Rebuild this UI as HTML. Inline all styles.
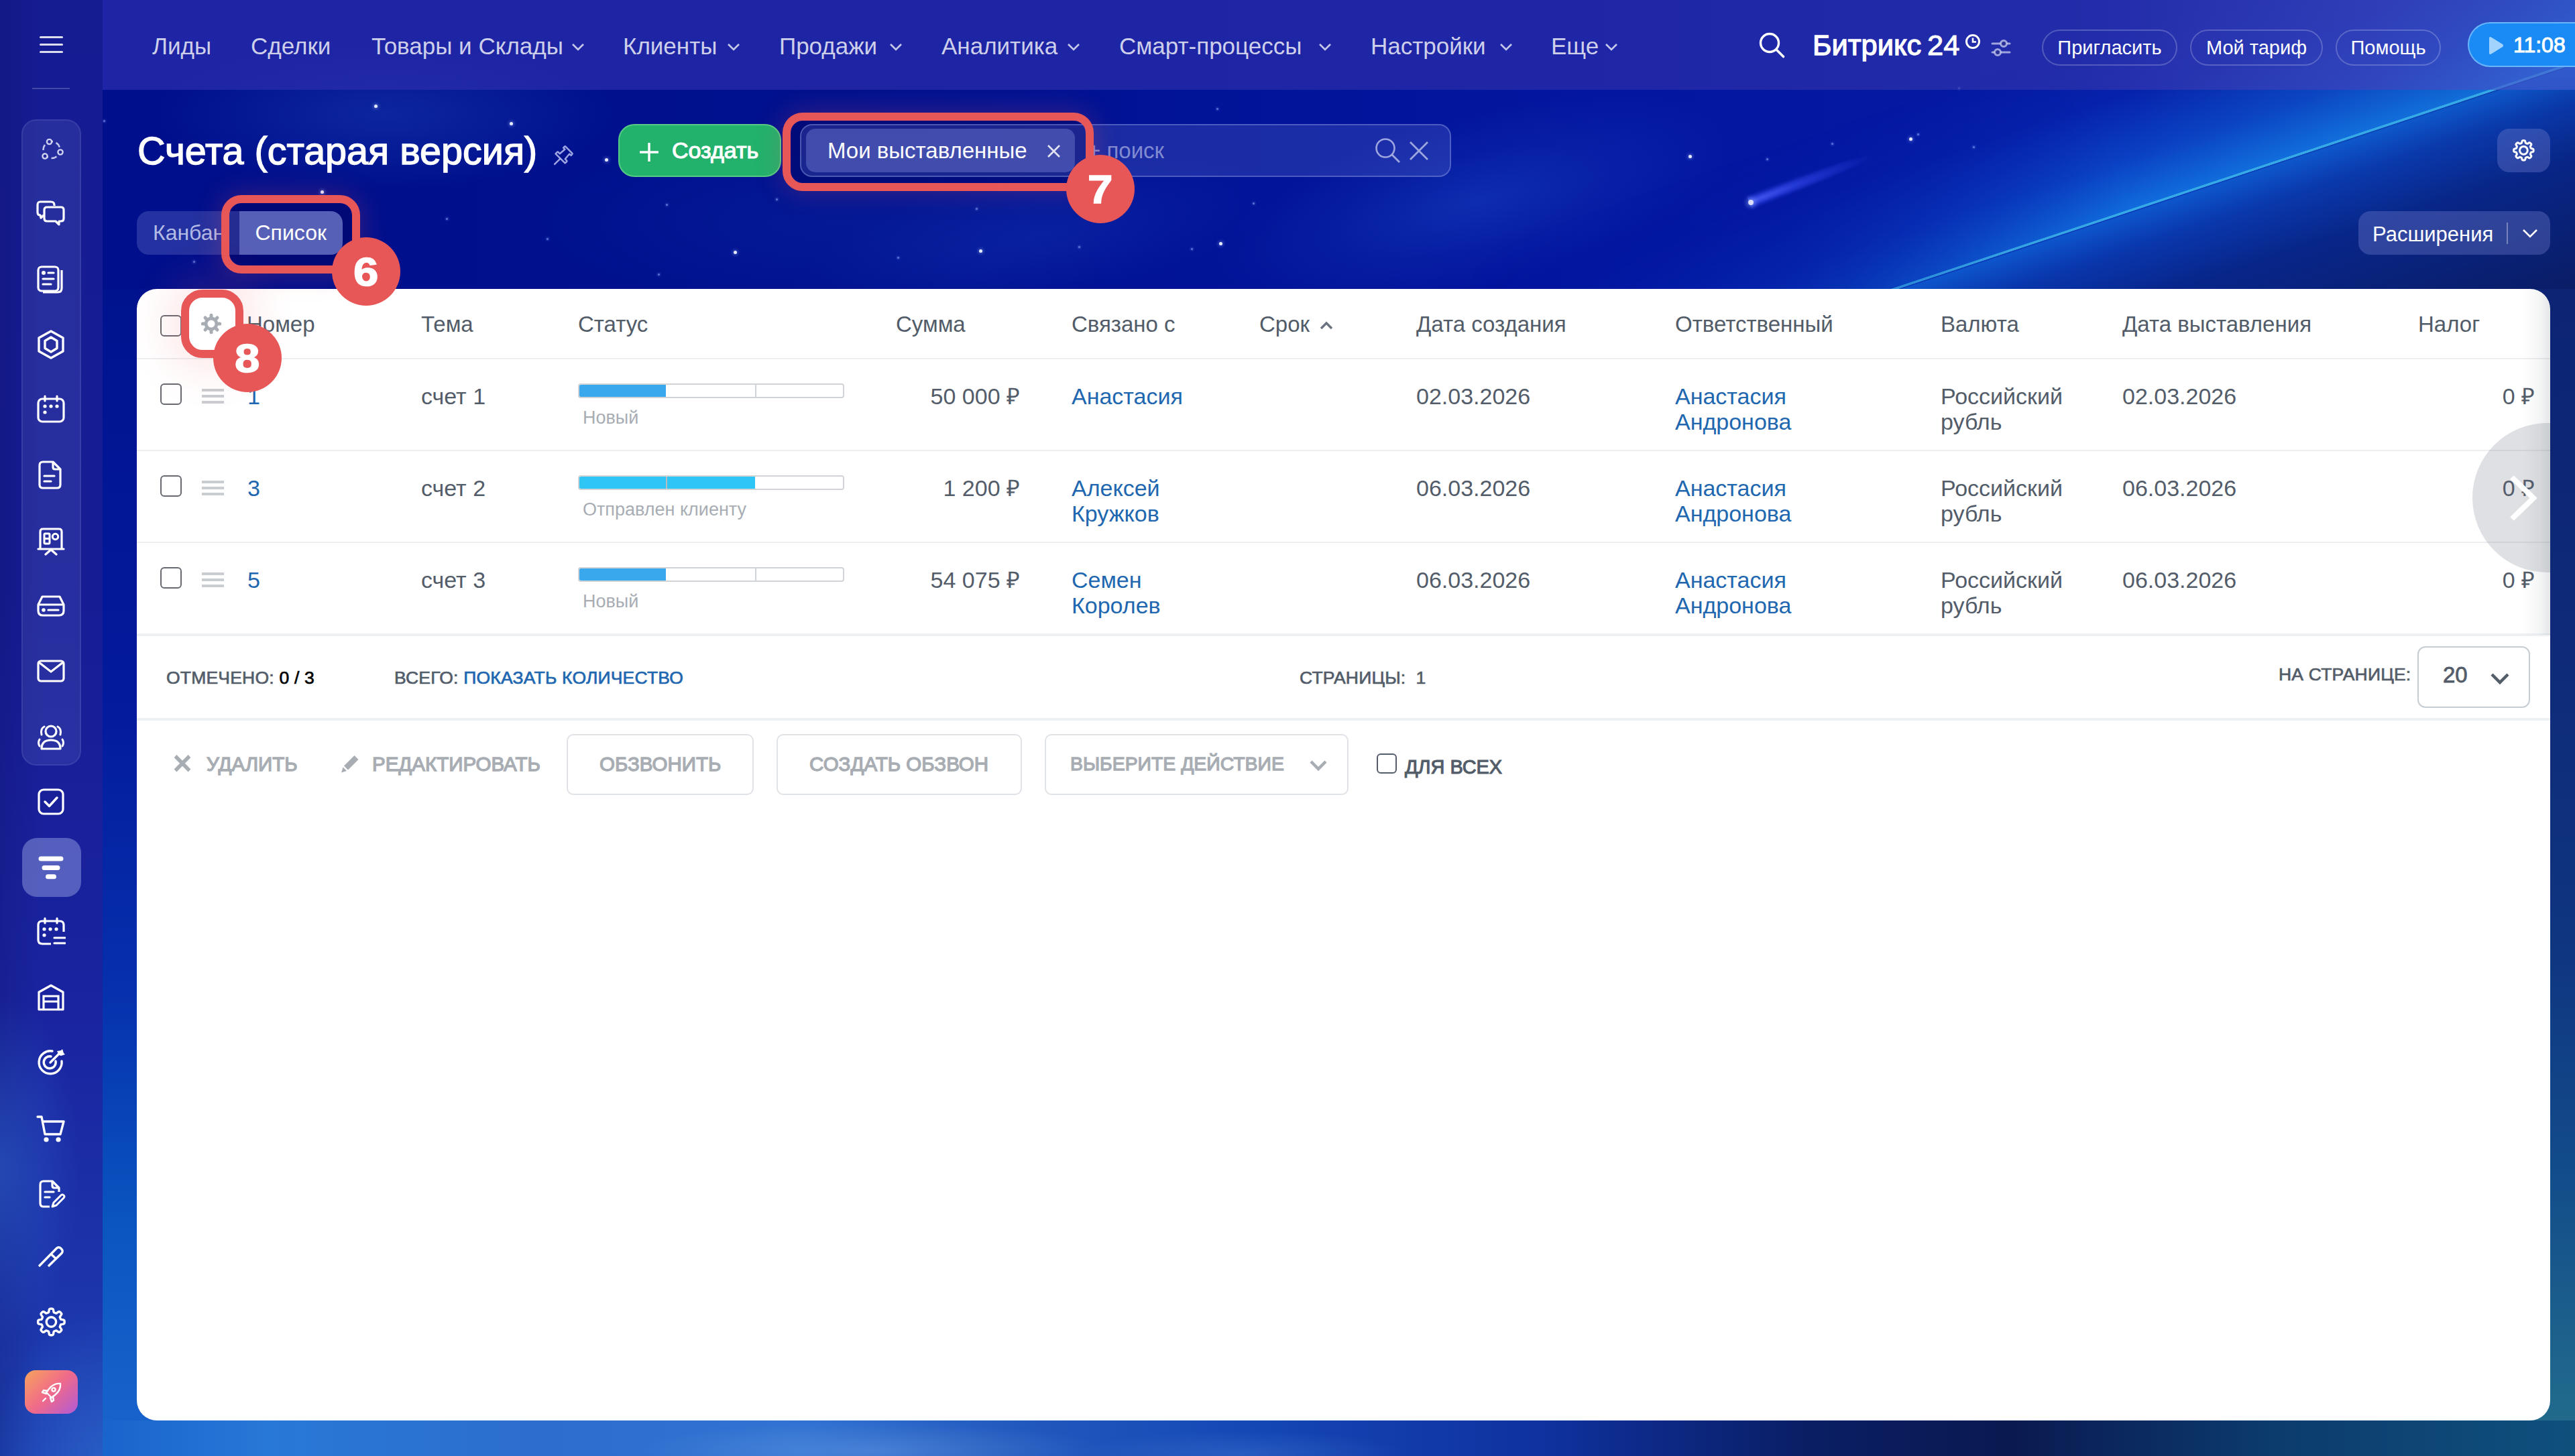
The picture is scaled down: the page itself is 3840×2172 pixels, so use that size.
<!DOCTYPE html>
<html lang="ru"><head><meta charset="utf-8"><title>Счета</title>
<style>
*{margin:0;padding:0;box-sizing:border-box}
html,body{width:3840px;height:2172px;overflow:hidden;font-family:"Liberation Sans",sans-serif}
body{position:relative;background:#0a118c}
.a{position:absolute}
.t{position:absolute;line-height:1;white-space:nowrap}
#bg{left:0;top:0;width:3840px;height:2172px;overflow:hidden;background:#0312a0}
#hb{left:153px;top:0;width:3687px;height:480px;overflow:hidden;
 background:
  linear-gradient(161.6deg,rgba(0,0,0,0) 0%,rgba(0,0,0,0) 77.4%,rgba(15,95,210,.85) 77.6%,rgba(10,60,175,.85) 80.6%,rgba(8,38,135,.9) 85.5%,rgba(10,28,100,.95) 97%),
  radial-gradient(ellipse 500px 160px at 420px 170px,rgba(40,90,200,.3),rgba(40,90,200,0) 70%),
  radial-gradient(ellipse 700px 200px at 1100px 330px,rgba(30,70,190,.15),rgba(30,70,190,0) 70%),
  linear-gradient(90deg,#000f8c 0%,#00118f 30%,#02149a 50%,#0316a0 62%,#0418a2 72%,#061ca6 82%,#0a2ca0 92%,#0a2688 100%)}
#lstrip{left:153px;top:431px;width:120px;height:1741px;background:linear-gradient(180deg,#00138f 0%,#031a9c 35%,#0630ad 60%,#0a55c0 80%,rgb(24,98,204) 97%,rgb(25,100,205) 100%)}
#rstrip{left:3740px;top:431px;width:100px;height:1741px;background:linear-gradient(180deg,rgb(12,36,115) 0%,rgb(14,42,120) 30%,rgb(15,52,128) 55%,rgb(18,75,138) 75%,rgb(30,100,140) 92%,rgb(35,110,140) 100%)}
#bstrip{left:153px;top:2119px;width:3687px;height:53px;background:radial-gradient(ellipse 500px 60px at 1150px 45px,rgba(140,185,240,.28),rgba(140,185,240,0) 70%),radial-gradient(ellipse 350px 50px at 1700px 50px,rgba(120,170,235,.2),rgba(120,170,235,0) 70%),linear-gradient(90deg,rgb(25,100,205) 0%,rgb(40,120,215) 6.7%,rgb(45,110,205) 17.5%,rgb(50,115,210) 28%,rgb(35,90,190) 36.5%,rgb(20,70,180) 47%,rgb(15,50,160) 58%,rgb(10,30,100) 69%,rgb(10,25,80) 77%,rgb(12,60,110) 88%,rgb(15,80,125) 100%)}
#side{left:0;top:0;width:153px;height:2172px;background:radial-gradient(ellipse 120px 260px at 0px 1740px,rgba(50,110,210,.45),rgba(50,110,210,0) 100%),radial-gradient(ellipse 160px 220px at 153px 2172px,rgba(50,120,215,.5),rgba(50,120,215,0) 100%),linear-gradient(90deg,rgba(0,0,40,.12),rgba(0,0,0,0) 40%),linear-gradient(180deg,#151c92 0%,#161c94 40%,#1a24a0 70%,#1c34aa 88%,#1e40b2 100%)}
.star{position:absolute;width:5px;height:5px;border-radius:3px;background:#e6eaff;box-shadow:0 0 5px 1px rgba(170,190,255,.5)}
.star.s{width:3px;height:3px;box-shadow:0 0 3px 1px rgba(120,150,255,.35);background:rgba(160,180,255,.6)}
#topnav{left:153px;top:0;width:3687px;height:134px;background:linear-gradient(90deg,rgba(42,45,175,.72) 0%,rgba(42,45,170,.7) 60%,rgba(48,52,172,.68) 80%,rgba(62,68,190,.72) 92%,rgba(70,95,210,.62) 100%)}
.nav{font-size:35px;color:rgba(255,255,255,.78);top:51px}
.chev{position:absolute;width:12px;height:12px;border-right:2.5px solid rgba(255,255,255,.75);border-bottom:2.5px solid rgba(255,255,255,.75);transform:rotate(45deg)}
.pill{position:absolute;top:44px;height:54px;border:2px solid rgba(255,255,255,.22);border-radius:27px;color:#fff;font-size:29px;line-height:50px;text-align:center}
#card{left:204px;top:431px;width:3599px;height:1688px;background:#fff;border-radius:30px}
.hd{font-size:33px;color:#525c69;top:467px}
.cell{font-size:34px;color:#535c69}
.lnk{color:#2067b0}
.rowline{position:absolute;left:204px;width:3599px;height:2px;background:#edeef0}
.cb{position:absolute;width:32px;height:32px;border:2.5px solid #666a70;border-radius:6px;background:#fff}
.drag{position:absolute;width:33px;height:22px;border-top:4px solid #c9ccd1;border-bottom:4px solid #c9ccd1}
.drag:after{content:"";position:absolute;left:0;right:0;top:5px;height:4px;background:#c9ccd1}
.prog{position:absolute;left:862px;width:397px;height:22px;border:2px solid #d0d4d9;border-radius:4px;background:#fff;overflow:hidden}
.prog i{position:absolute;top:0;bottom:0;left:0}
.prog b{position:absolute;top:0;bottom:0;width:2px;background:#d0d4d9}
.stat{font-size:27px;color:#a8adb4}
.ft{font-size:26.5px;color:#535c69;letter-spacing:.2px;-webkit-text-stroke:.7px #535c69}
.btnb{position:absolute;border:2px solid #dfe3e7;border-radius:10px;height:91px;top:1095px}
.act{font-size:29.5px;color:#a8adb3;-webkit-text-stroke:1.3px #a8adb3}
.red{position:absolute;border:12px solid #e85757;border-radius:32px}
.badge{position:absolute;width:102px;height:102px;border-radius:51px;background:#e85757;color:#fff;font-weight:bold;font-size:60px;line-height:104px;text-align:center;-webkit-text-stroke:1.5px #fff}
.badge span{display:inline-block;transform:scaleX(1.12)}
.si{position:absolute;left:33px;width:88px;height:88px}
.si svg{position:absolute;left:22px;top:22px;width:44px;height:44px}
</style></head>
<body>
<div id="bg" class="a"></div>
<div id="hb" class="a">
 <div class="a" style="left:1650px;top:170px;width:800px;height:260px;transform:rotate(-14deg);background:radial-gradient(ellipse 50% 50% at 50% 50%,rgba(40,95,215,.32) 0%,rgba(30,80,200,.15) 55%,rgba(30,80,200,0) 100%)"></div>
 <div class="a" style="left:1050px;top:250px;width:700px;height:200px;transform:rotate(-10deg);background:radial-gradient(ellipse 50% 50% at 50% 50%,rgba(40,95,215,.16) 0%,rgba(30,80,200,0) 100%)"></div>
 <div class="a" style="left:2077px;top:371px;width:2000px;height:260px;transform-origin:0 100%;transform:rotate(-18.4deg);background:linear-gradient(0deg,rgba(20,130,235,.8) 0%,rgba(15,100,225,.5) 30%,rgba(10,60,200,.2) 65%,rgba(10,40,180,0) 100%);-webkit-mask-image:linear-gradient(90deg,transparent 0%,rgba(0,0,0,.3) 25%,#000 50%,#000 100%)"></div>
 <div class="a" style="left:2077px;top:627px;width:2000px;height:4px;transform-origin:0 100%;transform:rotate(-18.4deg);background:rgba(70,195,235,.7);box-shadow:0 0 10px 4px rgba(40,160,230,.45);-webkit-mask-image:linear-gradient(90deg,transparent 0%,#000 40%,#000 100%)"></div>
 <div class="a" style="left:2455px;top:288px;width:200px;height:28px;transform-origin:0 50%;transform:rotate(-20.7deg);background:radial-gradient(ellipse 100% 50% at 0% 50%,rgba(80,100,255,.85) 0%,rgba(60,80,250,.5) 45%,rgba(40,60,240,0) 100%);-webkit-mask-image:linear-gradient(180deg,transparent 0%,#000 30%,#000 70%,transparent 100%)"></div>
 <div class="a" style="left:2454px;top:298px;width:8px;height:8px;border-radius:4px;background:rgba(235,240,255,.9);box-shadow:0 0 6px 3px rgba(150,170,255,.5)"></div>
</div>

<div id="lstrip" class="a"></div>
<div id="rstrip" class="a"></div>
<div id="bstrip" class="a"></div>
<div class="star" style="left:558px;top:156px"></div><div class="star" style="left:760px;top:182px"></div><div class="star s" style="left:154px;top:179px"></div><div class="star" style="left:478px;top:284px"></div><div class="star s" style="left:665px;top:325px"></div><div class="star" style="left:902px;top:236px"></div><div class="star" style="left:1094px;top:374px"></div><div class="star s" style="left:981px;top:408px"></div><div class="star s" style="left:288px;top:389px"></div><div class="star s" style="left:815px;top:355px"></div><div class="star s" style="left:1157px;top:296px"></div><div class="star s" style="left:993px;top:304px"></div><div class="star" style="left:1460px;top:372px"></div><div class="star s" style="left:1455px;top:310px"></div><div class="star s" style="left:1338px;top:383px"></div><div class="star s" style="left:1814px;top:161px"></div><div class="star" style="left:1818px;top:361px"></div><div class="star s" style="left:1868px;top:302px"></div><div class="star s" style="left:1776px;top:370px"></div><div class="star s" style="left:1608px;top:367px"></div><div class="star" style="left:2518px;top:231px"></div><div class="star s" style="left:2634px;top:236px"></div><div class="star" style="left:2847px;top:205px"></div><div class="star s" style="left:2859px;top:199px"></div><div class="star s" style="left:2942px;top:218px"></div><div class="star s" style="left:2731px;top:213px"></div><div class="star s" style="left:2920px;top:130px"></div>
<div id="side" class="a"></div>
<div id="topnav" class="a"></div>

<!-- hamburger -->
<div class="a" style="left:59px;top:54px;width:35px;height:3.2px;background:rgba(255,255,255,.85);border-radius:2px"></div>
<div class="a" style="left:59px;top:65px;width:35px;height:3.2px;background:rgba(255,255,255,.85);border-radius:2px"></div>
<div class="a" style="left:59px;top:76px;width:35px;height:3.2px;background:rgba(255,255,255,.85);border-radius:2px"></div>
<div class="a" style="left:48px;top:131px;width:56px;height:2px;background:rgba(255,255,255,.2)"></div>

<!-- nav -->
<div class="t nav" id="n1" style="left:227px">Лиды</div>
<div class="t nav" id="n2" style="left:374px">Сделки</div>
<div class="t nav" id="n3" style="left:554px">Товары и Склады</div>
<div class="t nav" id="n4" style="left:929px">Клиенты</div>
<div class="t nav" id="n5" style="left:1162px">Продажи</div>
<div class="t nav" id="n6" style="left:1404px">Аналитика</div>
<div class="t nav" id="n7" style="left:1669px">Смарт-процессы</div>
<div class="t nav" id="n8" style="left:2044px">Настройки</div>
<div class="t nav" id="n9" style="left:2313px">Еще</div>


<!-- nav chevrons -->
<svg class="a" style="left:852px;top:63px" width="20" height="14" viewBox="0 0 20 14"><path d="M2 3 L10 11 L18 3" fill="none" stroke="rgba(255,255,255,.75)" stroke-width="2.6"/></svg>
<svg class="a" style="left:1084px;top:63px" width="20" height="14" viewBox="0 0 20 14"><path d="M2 3 L10 11 L18 3" fill="none" stroke="rgba(255,255,255,.75)" stroke-width="2.6"/></svg>
<svg class="a" style="left:1326px;top:63px" width="20" height="14" viewBox="0 0 20 14"><path d="M2 3 L10 11 L18 3" fill="none" stroke="rgba(255,255,255,.75)" stroke-width="2.6"/></svg>
<svg class="a" style="left:1591px;top:63px" width="20" height="14" viewBox="0 0 20 14"><path d="M2 3 L10 11 L18 3" fill="none" stroke="rgba(255,255,255,.75)" stroke-width="2.6"/></svg>
<svg class="a" style="left:1966px;top:63px" width="20" height="14" viewBox="0 0 20 14"><path d="M2 3 L10 11 L18 3" fill="none" stroke="rgba(255,255,255,.75)" stroke-width="2.6"/></svg>
<svg class="a" style="left:2236px;top:63px" width="20" height="14" viewBox="0 0 20 14"><path d="M2 3 L10 11 L18 3" fill="none" stroke="rgba(255,255,255,.75)" stroke-width="2.6"/></svg>
<svg class="a" style="left:2393px;top:63px" width="20" height="14" viewBox="0 0 20 14"><path d="M2 3 L10 11 L18 3" fill="none" stroke="rgba(255,255,255,.75)" stroke-width="2.6"/></svg>

<!-- search / logo -->
<svg class="a" style="left:2622px;top:47px" width="42" height="42" viewBox="0 0 42 42"><circle cx="17" cy="17" r="13.5" fill="none" stroke="#fff" stroke-width="3.4"/><path d="M27 27 L37.5 37.5" stroke="#fff" stroke-width="3.6" stroke-linecap="round"/></svg>
<div class="t" id="logo" style="left:2703px;top:45.7px;font-size:43.4px;color:#fff;-webkit-text-stroke:1.3px #fff">Битрикс</div>
<div class="t" id="logo24" style="left:2874px;top:45.7px;font-size:43.4px;color:#fff;-webkit-text-stroke:1px #fff">24</div>
<svg class="a" style="left:2929px;top:49px" width="26" height="26" viewBox="0 0 26 26"><circle cx="13" cy="13" r="9.5" fill="none" stroke="#fff" stroke-width="3"/><path d="M13 7.5 V13.5 H18" fill="none" stroke="#fff" stroke-width="2.6"/></svg>
<svg class="a" style="left:2968px;top:57px" width="32" height="28" viewBox="0 0 32 28"><path d="M3 8 H29 M3 21 H29" stroke="rgba(200,205,240,.75)" stroke-width="3" stroke-linecap="round"/><circle cx="20" cy="8" r="4.5" fill="#2b2f98" stroke="rgba(200,205,240,.75)" stroke-width="3"/><circle cx="11" cy="21" r="4.5" fill="#2b2f98" stroke="rgba(200,205,240,.75)" stroke-width="3"/></svg>

<div class="pill" style="left:3045px;width:202px">Пригласить</div>
<div class="pill" style="left:3266px;width:198px">Мой тариф</div>
<div class="pill" style="left:3483px;width:157px">Помощь</div>
<div class="a" style="left:3680px;top:33px;width:200px;height:67px;border-radius:34px;background:#1a8af5;border:2px solid rgba(140,200,255,.7)"></div>
<svg class="a" style="left:3708px;top:53px" width="28" height="30" viewBox="0 0 28 30"><path d="M4 4 Q4 1 7 2.5 L24 13 Q26 15 24 17 L7 27.5 Q4 29 4 26 Z" fill="rgba(170,215,255,.95)"/></svg>
<div class="t" id="time" style="left:3748px;top:51.2px;font-size:32px;color:#fff;-webkit-text-stroke:1px #fff">11:08</div>

<!-- page header -->
<div class="t" id="title" style="left:205px;top:197px;font-size:57.5px;color:#fff;-webkit-text-stroke:1.4px #fff">Счета (старая версия)</div>
<svg class="a" style="left:815px;top:213px;transform:rotate(45deg)" width="44" height="44" viewBox="0 0 44 44"><g fill="none" stroke="rgba(185,190,240,.85)" stroke-width="2.5" stroke-linejoin="round" stroke-linecap="round"><path d="M15 6 H29 Q30 6 30 7 V9.5 H26.8 L27.6 19.5 H31 Q32 19.5 32 20.5 V24 H12 V20.5 Q12 19.5 13 19.5 H16.4 L17.2 9.5 H14 V7 Q14 6 15 6 Z"/><path d="M22 24.5 V36"/></g></svg>

<div class="a" style="left:922px;top:185px;width:243px;height:79px;border-radius:24px;background:#22b26c;border:2px solid rgba(120,220,150,.6)"></div>
<svg class="a" style="left:952px;top:211px" width="32" height="32" viewBox="0 0 32 32"><path d="M16 2 V30 M2 16 H30" stroke="#fff" stroke-width="3.4"/></svg>
<div class="t" id="create" style="left:1002px;top:207px;font-size:34px;color:#fff;-webkit-text-stroke:1.1px #fff">Создать</div>

<div class="a" style="left:1179px;top:180px;width:440px;height:93px;border-radius:20px;background:rgba(0,4,100,.5)"></div>
<div class="a" style="left:1193px;top:185px;width:971px;height:79px;border-radius:18px;background:rgba(120,130,220,.22);border:2px solid rgba(170,180,240,.35)"></div>
<div class="a" style="left:1202px;top:192px;width:401px;height:65px;border-radius:14px;background:rgba(120,130,215,.42)"></div>
<div class="t" id="chip" style="left:1234px;top:208px;font-size:33px;color:#fff">Мои выставленные</div>
<svg class="a" style="left:1560px;top:214px" width="23" height="23" viewBox="0 0 23 23"><path d="M3 3 L20 20 M20 3 L3 20" stroke="rgba(255,255,255,.85)" stroke-width="2.6"/></svg>
<div class="t" id="srch" style="left:1622px;top:208px;font-size:33px;color:rgba(200,205,240,.6)">+ поиск</div>
<svg class="a" style="left:2048px;top:203px" width="44" height="44" viewBox="0 0 44 44"><circle cx="18" cy="18" r="13.5" fill="none" stroke="rgba(200,205,240,.75)" stroke-width="2.6"/><path d="M28 28 L39 39" stroke="rgba(200,205,240,.75)" stroke-width="2.8"/></svg>
<svg class="a" style="left:2101px;top:210px" width="30" height="30" viewBox="0 0 30 30"><path d="M2 2 L28 28 M28 2 L2 28" stroke="rgba(200,205,240,.75)" stroke-width="2.8"/></svg>

<div class="a" style="left:3724px;top:192px;width:79px;height:65px;border-radius:18px;background:rgba(120,130,210,.35)"></div>
<svg class="a" style="left:3743px;top:204px" width="40" height="40" viewBox="0 0 40 40"><path fill="none" stroke="#fff" stroke-width="3" stroke-linejoin="round" d="M35.15 20.30 L35.13 20.88 L35.07 21.45 L34.89 22.02 L34.38 22.51 L33.15 22.84 L31.92 23.07 L31.38 23.40 L31.13 23.79 L30.96 24.20 L30.79 24.61 L30.62 25.01 L30.46 25.42 L30.35 25.87 L30.50 26.49 L31.21 27.52 L31.85 28.62 L31.86 29.34 L31.59 29.86 L31.23 30.31 L30.83 30.73 L30.41 31.13 L29.96 31.49 L29.44 31.76 L28.72 31.75 L27.62 31.11 L26.59 30.40 L25.97 30.25 L25.52 30.36 L25.11 30.52 L24.71 30.69 L24.30 30.86 L23.89 31.03 L23.50 31.28 L23.17 31.82 L22.94 33.05 L22.61 34.28 L22.12 34.79 L21.55 34.97 L20.98 35.03 L20.40 35.05 L19.82 35.03 L19.25 34.97 L18.68 34.79 L18.19 34.28 L17.86 33.05 L17.63 31.82 L17.30 31.28 L16.91 31.03 L16.50 30.86 L16.09 30.69 L15.69 30.52 L15.28 30.36 L14.83 30.25 L14.21 30.40 L13.18 31.11 L12.08 31.75 L11.36 31.76 L10.84 31.49 L10.39 31.13 L9.97 30.73 L9.57 30.31 L9.21 29.86 L8.94 29.34 L8.95 28.62 L9.59 27.52 L10.30 26.49 L10.45 25.87 L10.34 25.42 L10.18 25.01 L10.01 24.61 L9.84 24.20 L9.67 23.79 L9.42 23.40 L8.88 23.07 L7.65 22.84 L6.42 22.51 L5.91 22.02 L5.73 21.45 L5.67 20.88 L5.65 20.30 L5.67 19.72 L5.73 19.15 L5.91 18.58 L6.42 18.09 L7.65 17.76 L8.88 17.53 L9.42 17.20 L9.67 16.81 L9.84 16.40 L10.01 15.99 L10.18 15.59 L10.34 15.18 L10.45 14.73 L10.30 14.11 L9.59 13.08 L8.95 11.98 L8.94 11.26 L9.21 10.74 L9.57 10.29 L9.97 9.87 L10.39 9.47 L10.84 9.11 L11.36 8.84 L12.08 8.85 L13.18 9.49 L14.21 10.20 L14.83 10.35 L15.28 10.24 L15.69 10.08 L16.09 9.91 L16.50 9.74 L16.91 9.57 L17.30 9.32 L17.63 8.78 L17.86 7.55 L18.19 6.32 L18.68 5.81 L19.25 5.63 L19.82 5.57 L20.40 5.55 L20.98 5.57 L21.55 5.63 L22.12 5.81 L22.61 6.32 L22.94 7.55 L23.17 8.78 L23.50 9.32 L23.89 9.57 L24.30 9.74 L24.71 9.91 L25.11 10.08 L25.52 10.24 L25.97 10.35 L26.59 10.20 L27.62 9.49 L28.72 8.85 L29.44 8.84 L29.96 9.11 L30.41 9.47 L30.83 9.87 L31.23 10.29 L31.59 10.74 L31.86 11.26 L31.85 11.98 L31.21 13.08 L30.50 14.11 L30.35 14.73 L30.46 15.18 L30.62 15.59 L30.79 15.99 L30.96 16.40 L31.13 16.81 L31.38 17.20 L31.92 17.53 L33.15 17.76 L34.38 18.09 L34.89 18.58 L35.07 19.15 L35.13 19.72 Z"/><circle cx="20.4" cy="20.3" r="5.9" fill="none" stroke="#fff" stroke-width="3"/></svg>

<!-- tabs -->
<div class="a" style="left:342px;top:303px;width:183px;height:93px;border-radius:20px;background:rgba(0,4,100,.55)"></div>
<div class="a" style="left:204px;top:315px;width:307px;height:65px;border-radius:18px;background:rgba(120,130,210,.3);overflow:hidden"><div class="a" style="left:153px;top:0;width:154px;height:65px;background:rgba(150,160,230,.45)"></div></div>
<div class="t" id="kanban" style="left:228px;top:331px;font-size:32px;color:rgba(220,225,250,.8)">Канбан</div>
<div class="t" id="spisok" style="left:380.5px;top:331px;font-size:32px;color:#fff">Список</div>

<div class="a" style="left:3517px;top:315px;width:286px;height:65px;border-radius:18px;background:rgba(120,130,210,.35)"></div>
<div class="t" id="ext" style="left:3538px;top:334px;font-size:31px;color:#fff">Расширения</div>
<div class="a" style="left:3738px;top:332px;width:2px;height:32px;background:rgba(255,255,255,.35)"></div>
<svg class="a" style="left:3760px;top:340px" width="26" height="16" viewBox="0 0 26 16"><path d="M3 3 L13 13 L23 3" fill="none" stroke="#fff" stroke-width="2.6"/></svg>


<!-- card -->
<div id="card" class="a"></div>
<!-- header -->
<div class="cb" style="left:239px;top:470px"></div>
<div class="t hd" id="h0" style="left:368px;top:467.1px">Номер</div>
<div class="t hd" id="h1" style="left:628px;top:467.1px">Тема</div>
<div class="t hd" id="h2" style="left:862px;top:467.1px">Статус</div>
<div class="t hd" id="h3" style="left:1336px;top:467.1px">Сумма</div>
<div class="t hd" id="h4" style="left:1598px;top:467.1px">Связано с</div>
<div class="t hd" id="h5" style="left:1878px;top:467.1px">Срок</div>
<div class="t hd" id="h6" style="left:2112px;top:467.1px">Дата создания</div>
<div class="t hd" id="h7" style="left:2498px;top:467.1px">Ответственный</div>
<div class="t hd" id="h8" style="left:2894px;top:467.1px">Валюта</div>
<div class="t hd" id="h9" style="left:3165px;top:467.1px">Дата выставления</div>
<div class="t hd" id="h10" style="left:3606px;top:467.1px">Налог</div>
<svg class="a" style="left:1966px;top:478px" width="24" height="16" viewBox="0 0 24 16"><path d="M4 12 L12 4 L20 12" fill="none" stroke="#6a737f" stroke-width="3.4"/></svg>
<div class="rowline" style="top:534px"></div>
<div class="cb" style="left:239px;top:572px"></div>
<div class="drag" style="left:301px;top:580px"></div>
<div class="t cell lnk" id="r0num" style="left:369px;top:574.2px">1</div>
<div class="t cell" id="r0th" style="left:628px;top:574.2px">счет 1</div>
<div class="prog" style="top:572px"><i style="width:129px;background:#3aa8ec"></i><b style="left:262px"></b></div>
<div class="t stat" id="r0st" style="left:869px;top:609.8px">Новый</div>
<div class="t cell" id="r0sum" style="right:2319px;top:574.2px">50 000 ₽</div>
<div class="t cell lnk" id="r0lk" style="left:1598px;top:574.2px;line-height:38px;margin-top:-2px">Анастасия</div>
<div class="t cell" id="r0d1" style="left:2112px;top:574.2px">02.03.2026</div>
<div class="t cell lnk" id="r0resp" style="left:2498px;top:574.2px;line-height:38px;margin-top:-2px">Анастасия<br>Андронова</div>
<div class="t cell" id="r0cur" style="left:2894px;top:574.2px;line-height:38px;margin-top:-2px">Российский<br>рубль</div>
<div class="t cell" id="r0d2" style="left:3165px;top:574.2px">02.03.2026</div>
<div class="t cell" id="r0tax" style="right:60px;top:574.2px">0 ₽</div>
<div class="rowline" style="top:671px"></div>
<div class="cb" style="left:239px;top:709px"></div>
<div class="drag" style="left:301px;top:717px"></div>
<div class="t cell lnk" id="r1num" style="left:369px;top:711.2px">3</div>
<div class="t cell" id="r1th" style="left:628px;top:711.2px">счет 2</div>
<div class="prog" style="top:709px"><i style="width:262px;background:#2fc6f6"></i><b style="left:129px"></b><b style="left:129px;background:rgba(0,0,0,.12)"></b></div>
<div class="t stat" id="r1st" style="left:869px;top:746.8px">Отправлен клиенту</div>
<div class="t cell" id="r1sum" style="right:2319px;top:711.2px">1 200 ₽</div>
<div class="t cell lnk" id="r1lk" style="left:1598px;top:711.2px;line-height:38px;margin-top:-2px">Алексей<br>Кружков</div>
<div class="t cell" id="r1d1" style="left:2112px;top:711.2px">06.03.2026</div>
<div class="t cell lnk" id="r1resp" style="left:2498px;top:711.2px;line-height:38px;margin-top:-2px">Анастасия<br>Андронова</div>
<div class="t cell" id="r1cur" style="left:2894px;top:711.2px;line-height:38px;margin-top:-2px">Российский<br>рубль</div>
<div class="t cell" id="r1d2" style="left:3165px;top:711.2px">06.03.2026</div>
<div class="t cell" id="r1tax" style="right:60px;top:711.2px">0 ₽</div>
<div class="rowline" style="top:808px"></div>
<div class="cb" style="left:239px;top:846px"></div>
<div class="drag" style="left:301px;top:854px"></div>
<div class="t cell lnk" id="r2num" style="left:369px;top:848.2px">5</div>
<div class="t cell" id="r2th" style="left:628px;top:848.2px">счет 3</div>
<div class="prog" style="top:846px"><i style="width:129px;background:#3aa8ec"></i><b style="left:262px"></b></div>
<div class="t stat" id="r2st" style="left:869px;top:883.8px">Новый</div>
<div class="t cell" id="r2sum" style="right:2319px;top:848.2px">54 075 ₽</div>
<div class="t cell lnk" id="r2lk" style="left:1598px;top:848.2px;line-height:38px;margin-top:-2px">Семен<br>Королев</div>
<div class="t cell" id="r2d1" style="left:2112px;top:848.2px">06.03.2026</div>
<div class="t cell lnk" id="r2resp" style="left:2498px;top:848.2px;line-height:38px;margin-top:-2px">Анастасия<br>Андронова</div>
<div class="t cell" id="r2cur" style="left:2894px;top:848.2px;line-height:38px;margin-top:-2px">Российский<br>рубль</div>
<div class="t cell" id="r2d2" style="left:3165px;top:848.2px">06.03.2026</div>
<div class="t cell" id="r2tax" style="right:60px;top:848.2px">0 ₽</div>
<div class="rowline" style="top:945px"></div>

<div class="rowline" style="top:945px;height:4px;background:#eef1f4"></div>
<div class="t ft" id="f1" style="left:248px;top:997.6px">ОТМЕЧЕНО: <span style="color:#000;-webkit-text-stroke:.7px #000">0 / 3</span></div>
<div class="t ft" id="f2" style="left:588px;top:997.6px">ВСЕГО: <span style="color:#2067b0;-webkit-text-stroke:.7px #2067b0">ПОКАЗАТЬ КОЛИЧЕСТВО</span></div>
<div class="t ft" id="f3" style="left:1938px;top:997.6px">СТРАНИЦЫ: &nbsp;1</div>
<div class="t ft" id="f4" style="left:3398px;top:992.6px">НА СТРАНИЦЕ:</div>
<div class="a" style="left:3605px;top:964px;width:168px;height:92px;border:2px solid #c6cdd3;border-radius:12px"></div>
<div class="t" id="f5" style="left:3643px;top:990px;font-size:33px;color:#535c69;-webkit-text-stroke:.8px #535c69">20</div>
<svg class="a" style="left:3712px;top:1000px" width="32" height="24" viewBox="0 0 32 24"><path d="M4 6 L16 18 L28 6" fill="none" stroke="#535c69" stroke-width="4.5"/></svg>
<div class="rowline" style="top:1071px;height:4px;background:#eef1f4"></div>

<svg class="a" style="left:258px;top:1124px" width="28" height="30" viewBox="0 0 28 30"><path d="M3.5 4 L24.5 25.5 M24.5 4 L3.5 25.5" stroke="#a8adb3" stroke-width="5.4"/></svg>
<div class="t act" id="a1" style="left:308px;top:1125.3px">УДАЛИТЬ</div>
<svg class="a" style="left:507px;top:1126px" width="30" height="28" viewBox="0 0 30 28"><path d="M21.5 1 L27.5 7 L12 22.5 L6 16.5 Z" fill="#a8adb3"/><path d="M4.5 18.5 L10 24 L2 26.5 Z" fill="#a8adb3"/></svg>
<div class="t act" id="a2" style="left:555px;top:1125.3px">РЕДАКТИРОВАТЬ</div>
<div class="btnb" style="left:845px;width:279px"></div>
<div class="t act" id="a3" style="left:894px;top:1125.3px">ОБЗВОНИТЬ</div>
<div class="btnb" style="left:1158px;width:366px"></div>
<div class="t act" id="a4" style="left:1207px;top:1125.3px">СОЗДАТЬ ОБЗВОН</div>
<div class="btnb" style="left:1558px;width:453px"></div>
<div class="t act" id="a5" style="left:1596px;top:1124.6px;font-size:28.4px">ВЫБЕРИТЕ ДЕЙСТВИЕ</div>
<svg class="a" style="left:1951px;top:1131px" width="30" height="22" viewBox="0 0 30 22"><path d="M4 5 L15 16 L26 5" fill="none" stroke="#a8adb3" stroke-width="4.5"/></svg>
<div class="cb" style="left:2053px;top:1124px;width:30px;height:30px;border-color:#535c69"></div>
<div class="t act" id="a6" style="left:2095px;top:1129.5px;color:#535c69;font-size:28.9px;-webkit-text-stroke:1.1px #535c69">ДЛЯ ВСЕХ</div>


<!-- sidebar panel -->
<div class="a" style="left:32px;top:178px;width:89px;height:964px;border-radius:22px;background:rgba(130,140,220,.16);border:2px solid rgba(170,180,240,.12)"></div>
<div class="a" style="left:33px;top:1250px;width:88px;height:88px;border-radius:22px;background:rgba(160,170,230,.45)"></div>
<svg class="a" style="left:54px;top:199px" width="44" height="44" viewBox="0 0 44 44"><circle cx="23" cy="24.5" r="12.5" fill="none" stroke="rgba(225,228,250,.85)" stroke-width="2.6" stroke-dasharray="8.5 5" stroke-dashoffset="2"/><circle cx="19.5" cy="12.5" r="3.6" fill="#25299a" stroke="rgba(225,228,250,.9)" stroke-width="2.4"/><circle cx="13" cy="34" r="3.6" fill="#25299a" stroke="rgba(225,228,250,.9)" stroke-width="2.4"/><circle cx="36" cy="28" r="3.6" fill="#25299a" stroke="rgba(225,228,250,.9)" stroke-width="2.4"/></svg>
<svg class="a" style="left:54px;top:297px" width="44" height="44" viewBox="0 0 44 44"><path d="M6 4 H22 Q27 4 27 9 V10 M6 4 Q2 4 2 9 V20 Q2 24 6 24 L7 28 L11 24" fill="none" stroke="#fff" stroke-width="3.2" stroke-linejoin="round"/><path d="M16 12 H37 Q41 12 41 16 V29 Q41 33 37 33 H34 V38 L29 33 H16 Q12 33 12 29 V16 Q12 12 16 12 Z" fill="none" stroke="#fff" stroke-width="3.2" stroke-linejoin="round"/></svg>
<svg class="a" style="left:54px;top:394px" width="44" height="44" viewBox="0 0 44 44"><rect x="3" y="4" width="30" height="36" rx="5" fill="none" stroke="#fff" stroke-width="3.2"/><path d="M38 9 V36 Q38 42 32 42 H10" fill="none" stroke="#fff" stroke-width="3.2"/><circle cx="11" cy="13" r="3" fill="#fff"/><path d="M18 13 H26 M10 22 H26 M10 30 H22" stroke="#fff" stroke-width="3.2" stroke-linecap="round"/></svg>
<svg class="a" style="left:54px;top:492px" width="44" height="44" viewBox="0 0 44 44"><path d="M22 2 L40 12 V32 L22 42 L4 32 V12 Z" fill="none" stroke="#fff" stroke-width="3.4" stroke-linejoin="round"/><path d="M22 11 L31 16.5 V27.5 L22 33 L13 27.5 V16.5 Z" fill="none" stroke="#fff" stroke-width="3.4" stroke-linejoin="round"/></svg>
<svg class="a" style="left:54px;top:588px" width="44" height="44" viewBox="0 0 44 44"><rect x="3" y="7" width="38" height="34" rx="6" fill="none" stroke="#fff" stroke-width="3.2"/><path d="M13 3 V10 M31 3 V10" stroke="#fff" stroke-width="3.2" stroke-linecap="round"/><circle cx="13" cy="18" r="2.6" fill="#fff"/><circle cx="22" cy="18" r="2.6" fill="#fff"/><circle cx="31" cy="18" r="2.6" fill="#fff"/><circle cx="13" cy="27" r="2.6" fill="#fff"/></svg>
<svg class="a" style="left:54px;top:686px" width="44" height="44" viewBox="0 0 44 44"><path d="M10 3 H25 L36 14 V37 Q36 42 31 42 H10 Q5 42 5 37 V8 Q5 3 10 3 Z" fill="none" stroke="#fff" stroke-width="3.2" stroke-linejoin="round"/><path d="M25 3 V11 Q25 14 28 14 H36" fill="none" stroke="#fff" stroke-width="3.2"/><path d="M12 24 H27 M12 32 H22" stroke="#fff" stroke-width="3.2" stroke-linecap="round"/></svg>
<svg class="a" style="left:54px;top:785px" width="44" height="44" viewBox="0 0 44 44"><path d="M3 34 H41" stroke="#fff" stroke-width="3.2" stroke-linecap="round"/><path d="M6 34 V8 Q6 4 10 4 H34 Q38 4 38 8 V34" fill="none" stroke="#fff" stroke-width="3.2"/><rect x="12" y="11" width="8" height="15" rx="1.5" fill="none" stroke="#fff" stroke-width="3"/><path d="M12 18.5 H20" stroke="#fff" stroke-width="3"/><circle cx="28.5" cy="15.5" r="4.2" fill="none" stroke="#fff" stroke-width="3"/><path d="M14 42 L22 35 L30 42" fill="none" stroke="#fff" stroke-width="3.2" stroke-linecap="round"/></svg>
<svg class="a" style="left:54px;top:882px" width="44" height="44" viewBox="0 0 44 44"><path d="M9 8 H35 L41 20 V29 Q41 36 34 36 H10 Q3 36 3 29 V20 Z" fill="none" stroke="#fff" stroke-width="3.2" stroke-linejoin="round"/><path d="M3 20 H41" stroke="#fff" stroke-width="3.2"/><circle cx="11" cy="28" r="2.8" fill="#fff"/><path d="M18 28 H33" stroke="#fff" stroke-width="3.2" stroke-linecap="round"/></svg>
<svg class="a" style="left:54px;top:979px" width="44" height="44" viewBox="0 0 44 44"><rect x="3" y="7" width="38" height="30" rx="4" fill="none" stroke="#fff" stroke-width="3.2"/><path d="M4 9 L22 23 L40 9" fill="none" stroke="#fff" stroke-width="3.2" stroke-linejoin="round"/></svg>
<svg class="a" style="left:54px;top:1077px" width="44" height="44" viewBox="0 0 44 44"><circle cx="22" cy="14" r="8" fill="none" stroke="#fff" stroke-width="3.2"/><path d="M8 40 Q8 27 22 27 Q36 27 36 40 Z" fill="none" stroke="#fff" stroke-width="3.2" stroke-linejoin="round"/><path d="M12 7 Q6 10 8 19 M32 7 Q38 10 36 19 M5 36 Q2 31 5 26 M39 36 Q42 31 39 26" fill="none" stroke="#fff" stroke-width="3" stroke-linecap="round"/></svg>
<svg class="a" style="left:54px;top:1174px" width="44" height="44" viewBox="0 0 44 44"><rect x="4" y="4" width="36" height="36" rx="7" fill="none" stroke="#fff" stroke-width="3.2"/><path d="M13 22 L19.5 28.5 L31 16" fill="none" stroke="#fff" stroke-width="3.4" stroke-linecap="round" stroke-linejoin="round"/></svg>
<svg class="a" style="left:54px;top:1271px" width="44" height="44" viewBox="0 0 44 44"><path d="M7 10 H37 M12 23.4 H32 M17.5 36.8 H26.5" stroke="#fff" stroke-width="7" stroke-linecap="round"/></svg>
<svg class="a" style="left:54px;top:1368px" width="44" height="44" viewBox="0 0 44 44"><path d="M22 40 H9 Q3 40 3 34 V12 Q3 6 9 6 H35 Q41 6 41 12 V22" fill="none" stroke="#fff" stroke-width="3.2"/><path d="M13 2 V9 M31 2 V9" stroke="#fff" stroke-width="3.2" stroke-linecap="round"/><circle cx="12" cy="18" r="2.6" fill="#fff"/><circle cx="21" cy="18" r="2.6" fill="#fff"/><circle cx="30" cy="18" r="2.6" fill="#fff"/><circle cx="12" cy="27" r="2.6" fill="#fff"/><path d="M27 31 H43 M27 39 H43" stroke="#fff" stroke-width="3.2" stroke-linecap="round"/></svg>
<svg class="a" style="left:54px;top:1466px" width="44" height="44" viewBox="0 0 44 44"><path d="M4 40 V14 L22 4 L40 14 V40 Z" fill="none" stroke="#fff" stroke-width="3.2" stroke-linejoin="round"/><path d="M11 40 V20 H33 V40 M11 28 H33" fill="none" stroke="#fff" stroke-width="3.2"/></svg>
<svg class="a" style="left:54px;top:1563px" width="44" height="44" viewBox="0 0 44 44"><path d="M38 20 A17 17 0 1 1 24 5" fill="none" stroke="#fff" stroke-width="3.4" stroke-linecap="round"/><path d="M29 20 A9 9 0 1 1 22 13" fill="none" stroke="#fff" stroke-width="3.4" stroke-linecap="round"/><path d="M21 22 L37 6" stroke="#fff" stroke-width="3.4" stroke-linecap="round"/><path d="M31 5 L37 4 L39 2 L41 8 L43 10 L37 12 L34 11 Z" fill="#fff"/></svg>
<svg class="a" style="left:54px;top:1662px" width="44" height="44" viewBox="0 0 44 44"><path d="M2 4 H8 L13 30 H36 L41 11 H10" fill="none" stroke="#fff" stroke-width="3.4" stroke-linejoin="round" stroke-linecap="round"/><circle cx="15" cy="38" r="3.6" fill="#fff"/><circle cx="33" cy="38" r="3.6" fill="#fff"/></svg>
<svg class="a" style="left:54px;top:1759px" width="44" height="44" viewBox="0 0 44 44"><path d="M20 41 H11 Q6 41 6 36 V8 Q6 3 11 3 H24 L34 13 V19" fill="none" stroke="#fff" stroke-width="3.2" stroke-linejoin="round"/><path d="M24 3 V10 Q24 13 27 13 H34" fill="none" stroke="#fff" stroke-width="3.2"/><path d="M13 19 H26 M13 27 H20" stroke="#fff" stroke-width="3.2" stroke-linecap="round"/><path d="M24 41 L26 35 L37 24 Q39 22 41 24 Q43 26 41 28 L30 39 Z" fill="none" stroke="#fff" stroke-width="3" stroke-linejoin="round"/></svg>
<svg class="a" style="left:54px;top:1853px" width="44" height="44" viewBox="0 0 44 44"><g fill="none" stroke="#fff" stroke-width="3.3" stroke-linejoin="round"><path d="M4 36 L30 9.5 Q33.5 6 37 9.5 L37.5 10 Q41 13.5 37.5 17 L18 36"/><path d="M22 17.7 L29.6 24.8"/></g></svg>
<svg class="a" style="left:54px;top:1950px" width="44" height="44" viewBox="0 0 44 44"><path fill="none" stroke="#fff" stroke-width="3.4" stroke-linejoin="round" d="M42.20 22.00 L42.18 22.78 L42.08 23.55 L41.83 24.30 L41.08 24.96 L39.27 25.36 L37.46 25.62 L36.67 26.03 L36.34 26.53 L36.11 27.06 L35.89 27.59 L35.67 28.12 L35.46 28.65 L35.34 29.25 L35.61 30.09 L36.70 31.56 L37.70 33.11 L37.77 34.12 L37.41 34.82 L36.93 35.43 L36.40 36.00 L35.83 36.53 L35.22 37.01 L34.52 37.37 L33.51 37.30 L31.96 36.30 L30.49 35.21 L29.65 34.94 L29.05 35.06 L28.52 35.27 L27.99 35.49 L27.46 35.71 L26.93 35.94 L26.43 36.27 L26.02 37.06 L25.76 38.87 L25.36 40.68 L24.70 41.43 L23.95 41.68 L23.18 41.78 L22.40 41.80 L21.62 41.78 L20.85 41.68 L20.10 41.43 L19.44 40.68 L19.04 38.87 L18.78 37.06 L18.37 36.27 L17.87 35.94 L17.34 35.71 L16.81 35.49 L16.28 35.27 L15.75 35.06 L15.15 34.94 L14.31 35.21 L12.84 36.30 L11.29 37.30 L10.28 37.37 L9.58 37.01 L8.97 36.53 L8.40 36.00 L7.87 35.43 L7.39 34.82 L7.03 34.12 L7.10 33.11 L8.10 31.56 L9.19 30.09 L9.46 29.25 L9.34 28.65 L9.13 28.12 L8.91 27.59 L8.69 27.06 L8.46 26.53 L8.13 26.03 L7.34 25.62 L5.53 25.36 L3.72 24.96 L2.97 24.30 L2.72 23.55 L2.62 22.78 L2.60 22.00 L2.62 21.22 L2.72 20.45 L2.97 19.70 L3.72 19.04 L5.53 18.64 L7.34 18.38 L8.13 17.97 L8.46 17.47 L8.69 16.94 L8.91 16.41 L9.13 15.88 L9.34 15.35 L9.46 14.75 L9.19 13.91 L8.10 12.44 L7.10 10.89 L7.03 9.88 L7.39 9.18 L7.87 8.57 L8.40 8.00 L8.97 7.47 L9.58 6.99 L10.28 6.63 L11.29 6.70 L12.84 7.70 L14.31 8.79 L15.15 9.06 L15.75 8.94 L16.28 8.73 L16.81 8.51 L17.34 8.29 L17.87 8.06 L18.37 7.73 L18.78 6.94 L19.04 5.13 L19.44 3.32 L20.10 2.57 L20.85 2.32 L21.62 2.22 L22.40 2.20 L23.18 2.22 L23.95 2.32 L24.70 2.57 L25.36 3.32 L25.76 5.13 L26.02 6.94 L26.43 7.73 L26.93 8.06 L27.46 8.29 L27.99 8.51 L28.52 8.73 L29.05 8.94 L29.65 9.06 L30.49 8.79 L31.96 7.70 L33.51 6.70 L34.52 6.63 L35.22 6.99 L35.83 7.47 L36.40 8.00 L36.93 8.57 L37.41 9.18 L37.77 9.88 L37.70 10.89 L36.70 12.44 L35.61 13.91 L35.34 14.75 L35.46 15.35 L35.67 15.88 L35.89 16.41 L36.11 16.94 L36.34 17.47 L36.67 17.97 L37.46 18.38 L39.27 18.64 L41.08 19.04 L41.83 19.70 L42.08 20.45 L42.18 21.22 Z"/><circle cx="22.4" cy="22" r="7.2" fill="none" stroke="#fff" stroke-width="3.4"/></svg>
<div class="a" style="left:37px;top:2044px;width:79px;height:65px;border-radius:16px;background:linear-gradient(135deg,#f7a35c 0%,#f06a8a 50%,#b05ad6 100%)"></div>
<svg class="a" style="left:60px;top:2060px" width="34" height="34" viewBox="0 0 34 34"><g fill="none" stroke="#fff" stroke-width="2.4" stroke-linejoin="round" stroke-linecap="round"><path d="M30 4 Q20 3 13 12 L9 17 L17 25 L22 21 Q31 14 30 4 Z"/><circle cx="20" cy="13" r="2.6"/><path d="M11 15 L5 14 L3 17 L9 19 M19 23 L20 29 L17 31 L15 25 M8 26 L4 30"/></g></svg>

<!-- annotations -->
<div class="red" style="left:330px;top:291px;width:207px;height:117px;border-radius:30px;box-shadow:0 0 40px rgba(240,80,90,.25)"></div>
<div class="badge" style="left:495px;top:354px"><span>6</span></div>
<div class="red" style="left:1167px;top:168px;width:464px;height:117px;border-radius:30px;box-shadow:0 0 40px rgba(240,80,90,.25)"></div>
<div class="badge" style="left:1590px;top:231px"><span>7</span></div>
<div class="a" style="left:270px;top:432px;width:93px;height:102px;border-radius:32px;box-shadow:0 0 60px 20px rgba(240,90,100,.14)"></div>
<div class="red" style="left:270px;top:432px;width:93px;height:102px;background:#fff"></div>
<svg class="a" style="left:299.3px;top:467.3px" width="32" height="32" viewBox="0 0 32 32"><circle cx="16" cy="16" r="10.4" fill="#a8adb4"/><path d="M16.00 6.00 L16.00 3.30 M23.07 8.93 L24.98 7.02 M26.00 16.00 L28.70 16.00 M23.07 23.07 L24.98 24.98 M16.00 26.00 L16.00 28.70 M8.93 23.07 L7.02 24.98 M6.00 16.00 L3.30 16.00 M8.93 8.93 L7.02 7.02" stroke="#a8adb4" stroke-width="5" stroke-linecap="round"/><circle cx="16" cy="16" r="5.5" fill="#fff"/></svg>
<div class="badge" style="left:318px;top:483px"><span>8</span></div>

<!-- floating circle -->
<div class="a" style="left:204px;top:431px;width:3599px;height:1688px;border-radius:30px;overflow:hidden;pointer-events:none">
 <div class="a" style="left:3559px;top:0;width:40px;height:516px;background:linear-gradient(90deg,rgba(60,70,85,0) 0%,rgba(60,70,85,.05) 60%,rgba(60,70,85,.13) 100%)"></div>
 <div class="a" style="left:3483px;top:200px;width:223px;height:223px;border-radius:112px;background:rgba(90,100,115,.2)"></div>
 <svg class="a" style="left:3536px;top:278px" width="44" height="68" viewBox="0 0 44 68"><path d="M6 3 L38 34 L6 65" fill="none" stroke="#fff" stroke-width="8"/></svg>
</div>

</body></html>
